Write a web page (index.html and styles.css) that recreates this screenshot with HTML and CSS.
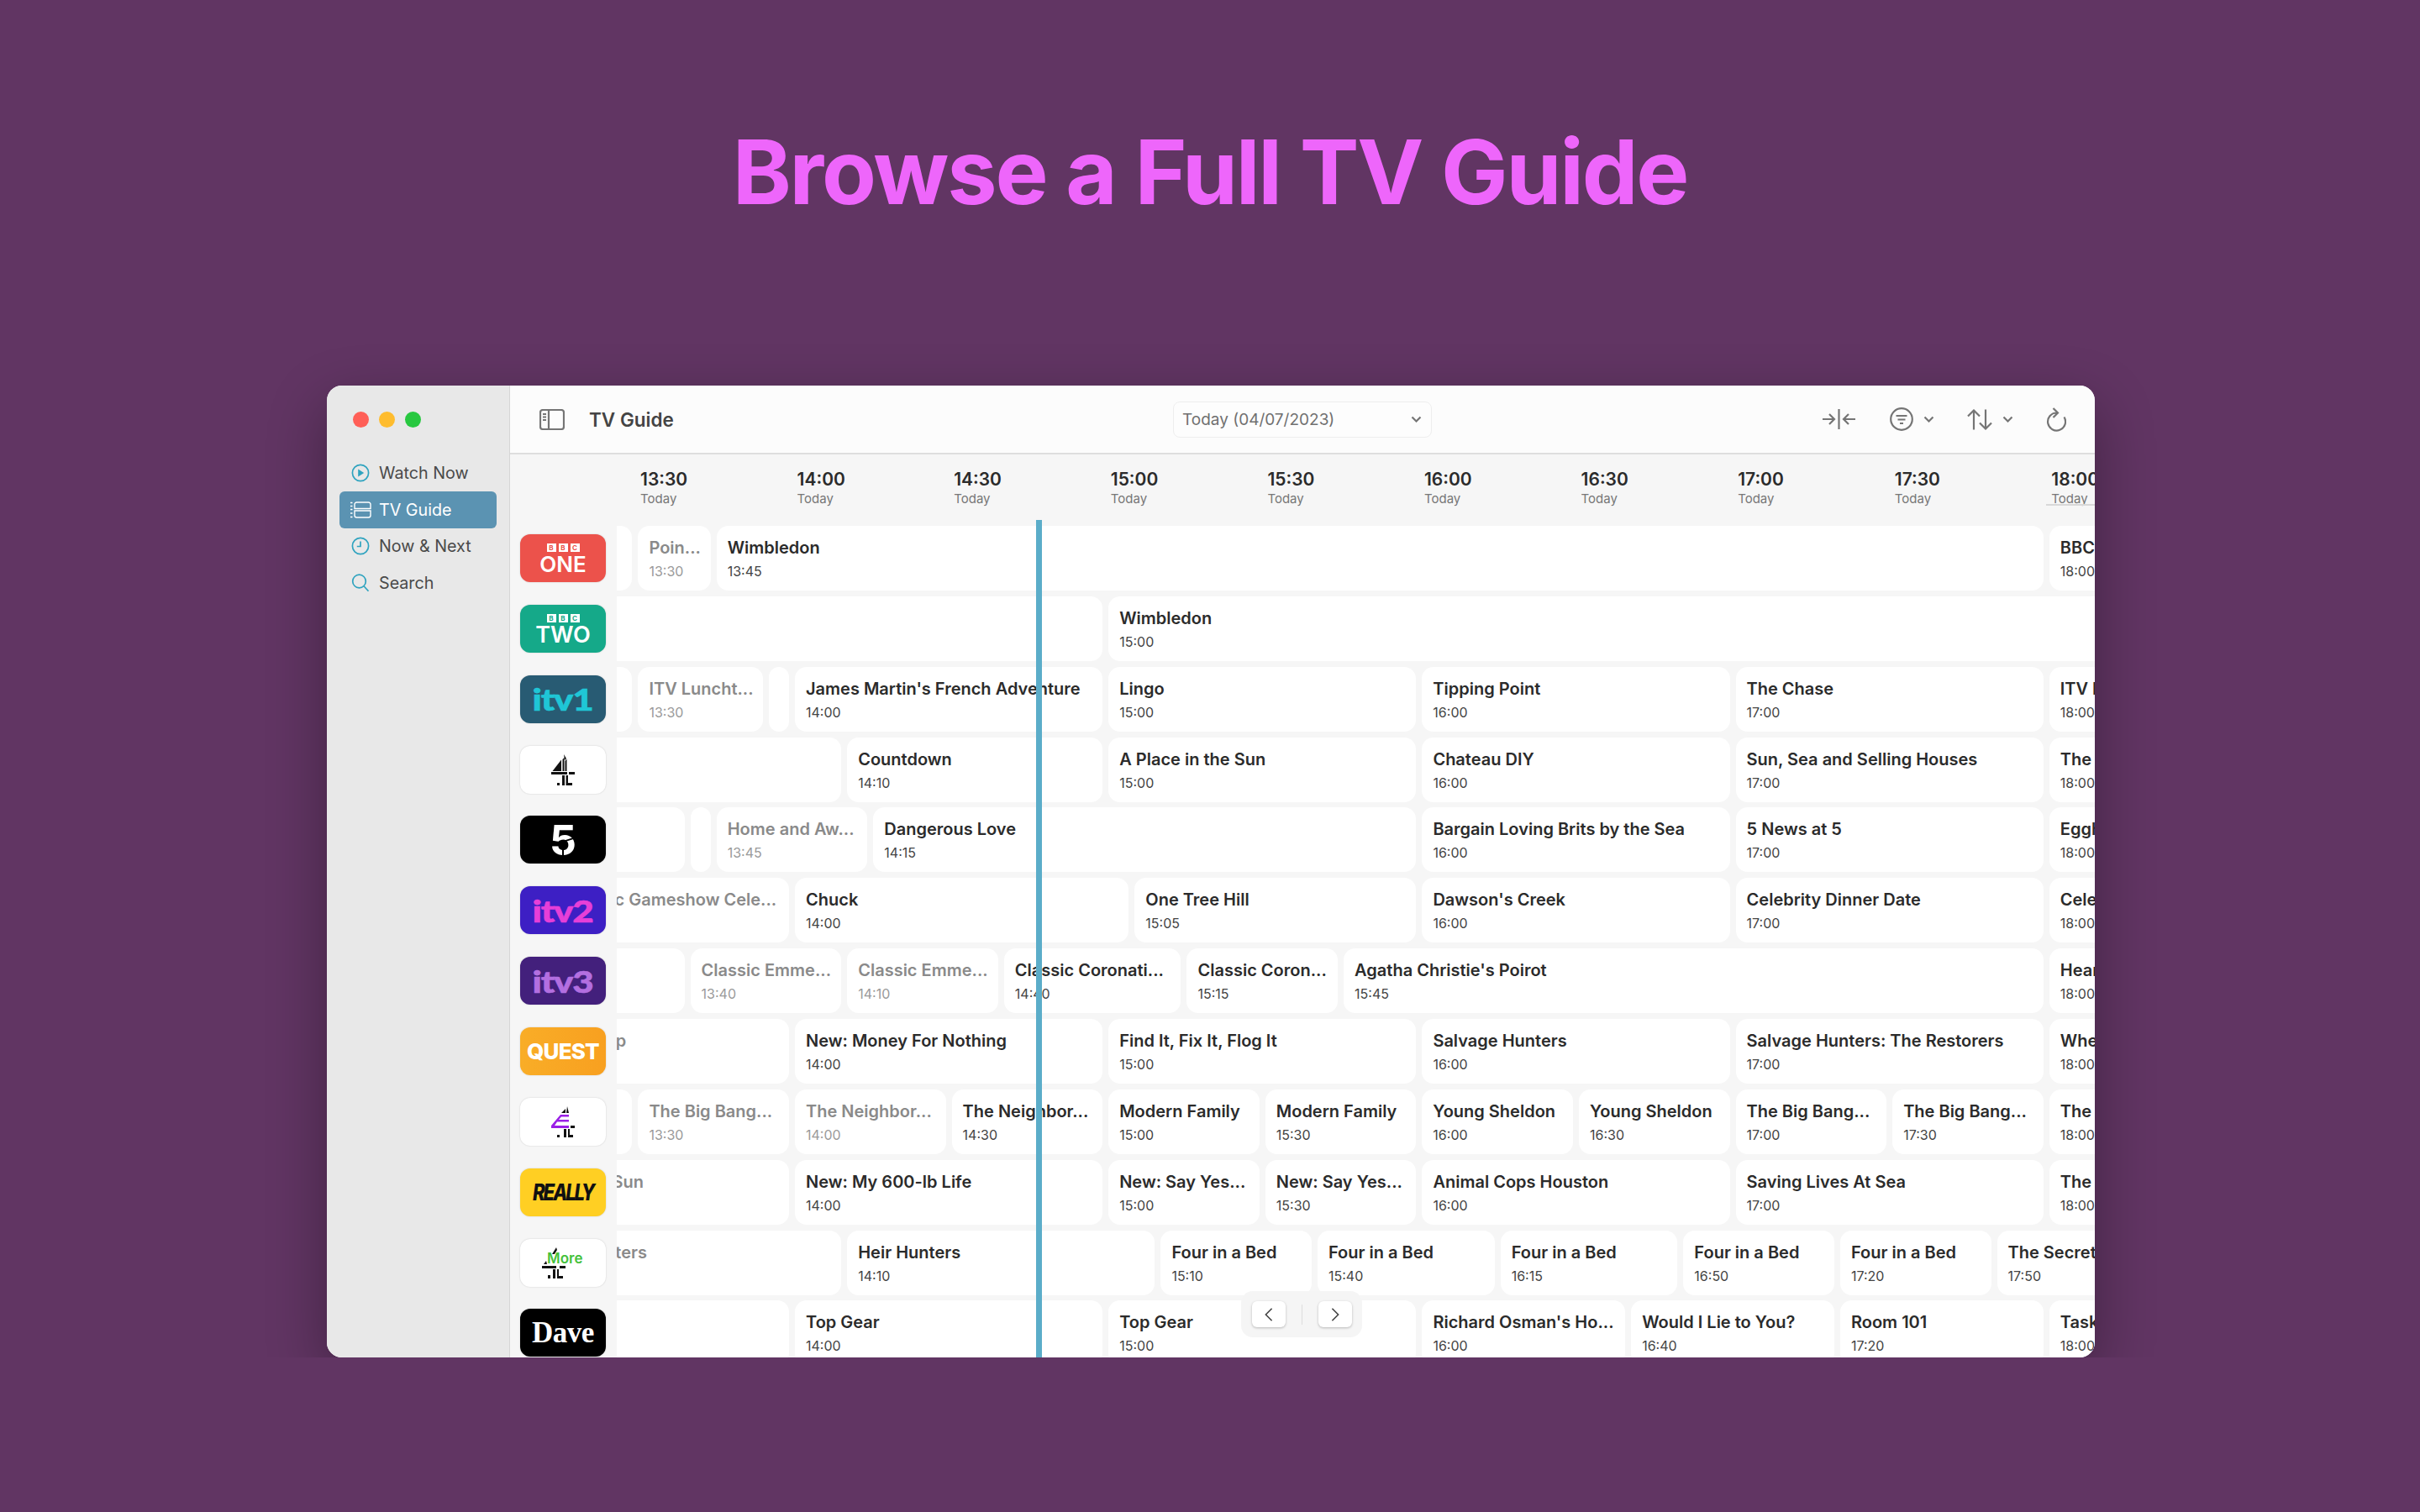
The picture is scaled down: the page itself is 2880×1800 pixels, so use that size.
FILE: index.html
```html
<!DOCTYPE html>
<html lang="en">
<head>
    <meta charset="UTF-8">
    <meta name="viewport" content="width=device-width, initial-scale=1.0">
    <title>Browse a Full TV Guide</title>
    <link rel="stylesheet" href="styles.css">
    <script>
        // pixels per minute on the guide, and where 14:00 sits inside a row
        const PX_PER_MIN = 6.22;
        const GAP = 7;
        const RIGHT_EDGE = 2600;

        // the lower half of the channel 4 family of marks is shared
        const FOUR_FOOT = "M7 34h3v3H7zM13 25h3v12h-3zM17.5 25H20v9h5v3h-7.5z";

        const hours = ["13:30", "14:00", "14:30", "15:00", "15:30", "16:00", "16:30", "17:00", "17:30", "18:00"];

        // each programme: [title, start, past?]
        const channels = [
            { logo: "logo-bbc-one", mark: bbcMark("ONE"), shows: [["", "13:10", 1], ["Poin...", "13:30", 1], ["Wimbledon", "13:45"], ["BBC News at Six", "18:00"]] },
            { logo: "logo-bbc-two", mark: bbcMark("TWO"), shows: [["", "13:10", 1], ["Wimbledon", "15:00"]] },
            { logo: "logo-itv1", mark: "<span>itv1</span>", shows: [["", "13:10", 1], ["ITV Luncht...", "13:30", 1], ["", "13:55", 1], ["James Martin's French Adventure", "14:00"], ["Lingo", "15:00"], ["Tipping Point", "16:00"], ["The Chase", "17:00"], ["ITV Evening News", "18:00"]] },
            { logo: "logo-white", mark: fourMark(""), shows: [["", "13:00", 1], ["Countdown", "14:10"], ["A Place in the Sun", "15:00"], ["Chateau DIY", "16:00"], ["Sun, Sea and Selling Houses", "17:00"], ["The Simpsons", "18:00"]] },
            { logo: "logo-five", mark: "<span>5</span><i></i><b></b>", shows: [["", "13:00", 1], ["", "13:40", 1], ["Home and Aw...", "13:45", 1], ["Dangerous Love", "14:15"], ["Bargain Loving Brits by the Sea", "16:00"], ["5 News at 5", "17:00"], ["Eggheads", "18:00"]] },
            { logo: "logo-itv2", mark: "<span>itv2</span>", shows: [["Classic Gameshow Cele...", "13:14", 1], ["Chuck", "14:00"], ["One Tree Hill", "15:05"], ["Dawson's Creek", "16:00"], ["Celebrity Dinner Date", "17:00"], ["Celebrity Juice", "18:00"]] },
            { logo: "logo-itv3", mark: "<span>itv3</span>", shows: [["", "13:00", 1], ["Classic Emme...", "13:40", 1], ["Classic Emme...", "14:10", 1], ["Classic Coronati...", "14:40"], ["Classic Coron...", "15:15"], ["Agatha Christie's Poirot", "15:45"], ["Heartbeat", "18:00"]] },
            { logo: "logo-quest", mark: "<span>QUEST</span>", shows: [["Wheeler Dealers: Trading Up", "12:41", 1], ["New: Money For Nothing", "14:00"], ["Find It, Fix It, Flog It", "15:00"], ["Salvage Hunters", "16:00"], ["Salvage Hunters: The Restorers", "17:00"], ["Wheeler Dealers", "18:00"]] },
            { logo: "logo-white", mark: fourMark("e4"), shows: [["", "13:10", 1], ["The Big Bang...", "13:30", 1], ["The Neighbor...", "14:00", 1], ["The Neighbor...", "14:30"], ["Modern Family", "15:00"], ["Modern Family", "15:30"], ["Young Sheldon", "16:00"], ["Young Sheldon", "16:30"], ["The Big Bang...", "17:00"], ["The Big Bang...", "17:30"], ["The Big Bang Theory", "18:00"]] },
            { logo: "logo-really", mark: "<span>REALLY</span>", shows: [["A Place in the Sun", "13:01", 1], ["New: My 600-lb Life", "14:00"], ["New: Say Yes...", "15:00"], ["New: Say Yes...", "15:30"], ["Animal Cops Houston", "16:00"], ["Saving Lives At Sea", "17:00"], ["The Yorkshire Vet", "18:00"]] },
            { logo: "logo-white", mark: fourMark("more"), shows: [["Heir Hunters", "13:10", 1], ["Heir Hunters", "14:10"], ["Four in a Bed", "15:10"], ["Four in a Bed", "15:40"], ["Four in a Bed", "16:15"], ["Four in a Bed", "16:50"], ["Four in a Bed", "17:20"], ["The Secret Life of the Zoo", "17:50"]] },
            { logo: "logo-dave", mark: "<span>Dave</span>", shows: [["", "13:00", 1], ["Top Gear", "14:00"], ["Top Gear", "15:00"], ["Richard Osman's Ho...", "16:00"], ["Would I Lie to You?", "16:40"], ["Room 101", "17:20"], ["Taskmaster", "18:00"]] }
        ];

        function bbcMark(word) {
            return `<div class="bbc-blocks"><u>B</u><u>B</u><u>C</u></div><span>${word}</span>`;
        }

        function fourMark(kind) {
            if (kind === "e4") {
                return `<svg class="four" viewBox="0 0 28 37"><path fill="#111" d="M12 8l5-5v5zM19 0l2 8h-3zM23 23h5v3h-5zM7 34h3v3H7zM15 27h3v10h-3zM20 27h2v7h4v3h-6z"/><path fill="#9a1fe6" d="M11 10h10v2.5h-9l-3 3.5h12v2.5H7l-3 4.5h17v3H0v-3z"/></svg>`;
            }
            if (kind === "more") {
                return `<div class="more-mark"><svg class="four" viewBox="0 0 28 37"><path fill="#111" d="M12 8l5-8 1 3-3 5zM2 20l3-4 1 4zM0 22h17v3H0zM21 22h7v3h-7zM7 33h3v4H7zM13 26h3v11h-3zM18 26h2v8h5v3h-7z"/></svg><em>More</em></div>`;
            }
            return `<svg class="four" viewBox="0 0 28 37"><path fill="#111" d="M15 0l3 5-2 2zM12 6.5V20H1.5zM13.5 6v14h2V4zM16.5 8l2-2.5V20h-2zM0 21h19v3H0zM21 21h7v3h-7z${FOUR_FOOT}"/></svg>`;
        }

        function toMinutes(time) {
            const [h, m] = time.split(":").map(Number);
            return h * 60 + m;
        }

        function xOf(time) {
            return (toMinutes(time) - 840) * PX_PER_MIN + 212;
        }

        function renderRow(channel) {
            const shows = channel.shows;
            const cards = shows.map((show, i) => {
                const left = xOf(show[1]);
                const right = i + 1 < shows.length ? xOf(shows[i + 1][1]) - GAP : RIGHT_EDGE;
                const past = show[2] ? " past" : "";
                const offset = i === 0 ? `margin-left:${left}px;` : "";
                const body = show[0] ? `<h3>${show[0]}</h3><p>${show[1]}</p>` : "";
                return `<div class="show${past}" style="${offset}width:${right - left}px">${body}</div>`;
            }).join("");
            return `<div class="row">
                <div class="logo ${channel.logo}">${channel.mark}</div>
                <div class="shows">${cards}</div>
            </div>`;
        }

        document.addEventListener("DOMContentLoaded", () => {
            document.getElementById("hours").innerHTML = hours.map(h => `
                <div class="hour"><strong>${h}</strong><span>Today</span></div>
            `).join("");
            document.getElementById("rows").innerHTML = channels.map(renderRow).join("");
        });
    </script>
</head>
<body>
    <h1 class="headline">Browse a Full TV Guide</h1>

    <div class="window">
        <aside class="sidebar">
            <div class="lights"><i class="red"></i><i class="amber"></i><i class="green"></i></div>
            <nav>
                <a class="nav-item">
                    <svg viewBox="0 0 22 22"><circle cx="11" cy="11" r="9.6"/><path class="solid" d="M8.2 6.4l7 4.6-7 4.6z"/></svg>
                    Watch Now
                </a>
                <a class="nav-item active">
                    <svg viewBox="0 0 25 20"><path d="M5 8.5v-5A2.5 2.5 0 0 1 7.5 1h14A2.5 2.5 0 0 1 24 3.5v5zM5 11h19v5.5a2.5 2.5 0 0 1-2.5 2.5h-14A2.5 2.5 0 0 1 5 16.5z"/><path class="dots" d="M0 1.5h2.5M0 5.5h2.5M0 9.5h2.5M0 14h2.5M0 18.5h2.5"/></svg>
                    TV Guide
                </a>
                <a class="nav-item">
                    <svg viewBox="0 0 22 22"><circle cx="11" cy="11" r="9.6"/><path d="M11 5.5v6H6.8"/></svg>
                    Now &amp; Next
                </a>
                <a class="nav-item">
                    <svg viewBox="0 0 22 22"><circle cx="9.5" cy="9" r="7.8"/><path d="M15 14.8l5.5 6"/></svg>
                    Search
                </a>
            </nav>
        </aside>

        <main class="content">
            <header class="toolbar">
                <svg class="tool side-toggle" viewBox="0 0 30 25"><rect x="1" y="1" width="28" height="23" rx="3"/><path d="M11 1v23M4 6h4M4 9.5h4M4 13h4"/></svg>
                <h2>TV Guide</h2>
                <div class="date-select">
                    <span>Today (04/07/2023)</span>
                    <svg class="chev" viewBox="0 0 13 8"><path d="M1.5 1.5l5 5 5-5"/></svg>
                </div>
                <div class="tools">
                    <svg class="tool compress" viewBox="0 0 39 24"><path d="M19.5 0v24M0 12h14M8 6l6 6-6 6M39 12H25M31 6l-6 6 6 6"/></svg>
                    <div class="tool-group">
                        <svg class="tool filter" viewBox="0 0 28 28"><circle cx="14" cy="14" r="12.8"/><path d="M7.5 10h13M9.5 14.5h9M12 19h4"/></svg>
                        <svg class="chev" viewBox="0 0 13 8"><path d="M1.5 1.5l5 5 5-5"/></svg>
                    </div>
                    <div class="tool-group sort-group">
                        <svg class="tool sort" viewBox="0 0 30 25"><path d="M8 24.5v-23M1 8.5l7-7 7 7M22 .5v23M15 16.5l7 7 7-7"/></svg>
                        <svg class="chev" viewBox="0 0 13 8"><path d="M1.5 1.5l5 5 5-5"/></svg>
                    </div>
                    <svg class="tool reload" viewBox="0 0 24 29"><path d="M12.5 6.5A10.5 10.5 0 1 0 21.5 11.5M8.5 1l5.5 5.5-5.5 5.5"/></svg>
                </div>
            </header>

            <div class="hours" id="hours"></div>
            <div class="rows" id="rows"></div>

            <div class="now-line"></div>
            <div class="hour-tick"></div>
            <div class="pager">
                <button><svg viewBox="0 0 12 20"><path d="M10 2L2 10l8 8"/></svg></button>
                <i></i>
                <button><svg viewBox="0 0 12 20"><path d="M2 2l8 8-8 8"/></svg></button>
            </div>
        </main>
    </div>
</body>
</html>
```

FILE: styles.css
```css
body {
    margin: 0;
    background-color: #613563;
    font-family: Inter, "Noto Sans", sans-serif;
    color: #2b2b2b;
}

.headline {
    margin: 0;
    padding-top: 142px;
    height: 459px;
    line-height: 126px;
    box-sizing: border-box;
    text-align: center;
    font-size: 106px;
    font-weight: 700;
    letter-spacing: -2.2px;
    color: #ee66fb;
}

.window {
    display: flex;
    width: 2104px;
    height: 1157px;
    margin-left: 389px;
    border-radius: 18px;
    overflow: hidden;
    background: #f6f6f6;
    box-shadow: 0 24px 70px rgba(0, 0, 0, 0.33);
}

/* sidebar */
.sidebar {
    flex: 0 0 218px;
    box-sizing: border-box;
    padding: 0 15px;
    background: #e8e8e8;
    border-right: 1px solid #d6d6d6;
}

.lights {
    display: flex;
    gap: 12px;
    box-sizing: border-box;
    height: 82px;
    padding: 31px 0 0 16px;
}

.lights i {
    width: 19px;
    height: 19px;
    border-radius: 50%;
}

.red { background: #ff5f57; }
.amber { background: #febc2e; }
.green { background: #28c840; }

.nav-item {
    display: flex;
    align-items: center;
    gap: 11px;
    height: 44px;
    margin-bottom: -0.3px;
    padding-left: 14px;
    border-radius: 6px;
    font-size: 19.7px;
    color: #4a4a4a;
}

.nav-item svg {
    width: 22px;
    height: 22px;
    fill: none;
    stroke: #2fa3bf;
    stroke-width: 1.7;
}

.nav-item svg .solid {
    fill: #2fa3bf;
    stroke: none;
}

.nav-item.active {
    background: #5b93b2;
    color: #fff;
}

.nav-item.active svg {
    stroke: #fff;
    stroke-width: 1.4;
    width: 25px;
    height: 20px;
    margin-left: -1px;
    margin-right: -2px;
}

/* toolbar */
.content {
    flex: 1;
    position: relative;
    min-width: 0;
}

.toolbar {
    display: flex;
    align-items: center;
    height: 80px;
    padding: 0 34px 0 35px;
    background: #fcfcfc;
    border-bottom: 2px solid #dedede;
}

.toolbar h2 {
    width: 695px;
    margin: 0 0 0 29px;
    font-size: 22.5px;
    font-weight: 600;
    color: #444;
}

.tool {
    fill: none;
    stroke: #757575;
    stroke-width: 2.2;
}

.side-toggle {
    width: 30px;
    height: 25px;
}

.date-select {
    display: flex;
    align-items: center;
    justify-content: space-between;
    box-sizing: border-box;
    width: 308px;
    height: 43px;
    padding: 0 11px 0 10px;
    background: #fdfdfd;
    border: 1.5px solid #eee;
    border-radius: 8px;
    font-size: 19px;
    color: #707070;
}

.chev {
    width: 13px;
    height: 8px;
    fill: none;
    stroke: #757575;
    stroke-width: 2.2;
}

.tools {
    display: flex;
    align-items: center;
    margin-left: auto;
    gap: 41px;
}

.tool-group {
    display: flex;
    align-items: center;
    gap: 12px;
}

.sort-group {
    margin-left: -2px;
}

.compress { width: 39px; height: 24px; }
.filter { width: 28px; height: 28px; }
.sort { width: 30px; height: 25px; }
.reload { width: 24px; height: 29px; margin-left: -2px; }

/* time header */
.hours {
    display: flex;
    height: 85px;
    padding-left: 155px;
}

.hour {
    flex: 0 0 186.6px;
    padding-top: 17px;
}

.hour strong {
    display: block;
    font-size: 21px;
    font-weight: 600;
    line-height: 26px;
    color: #2b2b2b;
}

.hour span {
    display: block;
    font-size: 15px;
    line-height: 20px;
    color: #777;
}

/* guide rows */
.rows {
    display: flex;
    flex-direction: column;
    gap: 6.86px;
}

.row {
    display: flex;
    align-items: center;
    flex: 0 0 77px;
    padding-left: 12px;
}

.logo {
    flex: 0 0 102px;
    height: 57px;
    margin-right: 13px;
    display: flex;
    align-items: center;
    justify-content: center;
    flex-direction: column;
    position: relative;
    border-radius: 12px;
    overflow: hidden;
    box-shadow: 0 0 2px rgba(0, 0, 0, 0.18);
    color: #fff;
}

.shows {
    display: flex;
    gap: 7px;
    flex: 1;
    min-width: 0;
    height: 77px;
    overflow: hidden;
}

.show {
    flex: none;
    box-sizing: border-box;
    height: 77px;
    padding: 14px 0 0 13px;
    background: #fff;
    border-radius: 14px;
}

.show:empty {
    padding: 0;
}

.show h3 {
    margin: 0;
    font-size: 20px;
    font-weight: 600;
    line-height: 24px;
    white-space: nowrap;
    color: #2b2b2b;
}

.show p {
    margin: 6px 0 0;
    font-size: 16px;
    line-height: 20px;
    color: #444;
}

.show.past h3 { color: #8a8a8a; }
.show.past p { color: #9a9a9a; }

/* channel logos */
.logo-bbc-one { background: #ec524b; }
.logo-bbc-two { background: #15a989; }

.bbc-blocks {
    display: flex;
    gap: 3px;
    margin: 2px 0 2px;
}

.bbc-blocks u {
    width: 11px;
    height: 10px;
    background: #fff;
    font-size: 8px;
    font-weight: 700;
    line-height: 10px;
    text-align: center;
    text-decoration: none;
}

.logo-bbc-one u { color: #ec524b; }
.logo-bbc-two u { color: #15a989; }

.logo-bbc-one span,
.logo-bbc-two span {
    font-size: 26px;
    font-weight: 600;
    line-height: 25px;
}

.logo-bbc-two span {
    font-size: 27px;
}

.logo-itv1 { background: #285b73; color: #1fc6d6; }
.logo-itv2 { background: #3d1fc4; color: #e63fd8; }
.logo-itv3 { background: #43207c; color: #b36fe0; }

.logo-itv1 span,
.logo-itv2 span,
.logo-itv3 span {
    font-family: Lato, sans-serif;
    font-size: 36px;
    font-weight: 900;
    letter-spacing: -1px;
    -webkit-text-stroke: 0.6px currentColor;
    transform: scaleX(1.22);
}

.logo-white { background: #fff; }

.four {
    width: 28px;
    height: 37px;
}

.more-mark {
    position: relative;
    width: 50px;
    height: 37px;
}

.more-mark em {
    position: absolute;
    left: 6px;
    top: 3px;
    font-size: 17px;
    font-weight: 600;
    font-style: normal;
    color: #45c13c;
}

.logo-five { background: #000; }

.logo-five span {
    font-size: 50px;
    font-weight: 700;
    line-height: 50px;
}

.logo-five i {
    position: absolute;
    left: 36px;
    top: 30px;
    width: 30px;
    height: 2px;
    background: #000;
    transform: rotate(-18deg);
}

.logo-five b {
    position: absolute;
    left: 50px;
    top: 34px;
    width: 2px;
    height: 16px;
    background: #000;
}

.logo-quest { background: linear-gradient(90deg, #f9ad27, #f8a020); }

.logo-quest span {
    font-size: 26px;
    font-weight: 800;
    letter-spacing: -0.8px;
}

.logo-really { background: #ffcf23; color: #111; }

.logo-really span {
    font-size: 27px;
    font-weight: 800;
    font-style: italic;
    letter-spacing: -2.5px;
    transform: scaleX(0.82);
}

.logo-dave { background: #000; }

.logo-dave span {
    font-family: "Liberation Serif", serif;
    font-size: 35px;
    font-weight: 700;
    letter-spacing: -0.5px;
}

/* overlays */
.now-line {
    position: absolute;
    left: 626px;
    top: 160px;
    bottom: 0;
    width: 7px;
    background: #5badc9;
}

.hour-tick {
    position: absolute;
    left: 1828px;
    top: 141px;
    right: 0;
    height: 2px;
    background: #d8d8d8;
}

.pager {
    position: absolute;
    left: 870px;
    top: 1078px;
    display: flex;
    align-items: center;
    gap: 19px;
    box-sizing: border-box;
    width: 144px;
    height: 55px;
    padding: 0 12px 0 13px;
    border-radius: 14px;
    background: #f5f5f5;
}

.pager button {
    display: flex;
    align-items: center;
    justify-content: center;
    width: 40px;
    height: 31px;
    padding: 0;
    border: none;
    border-radius: 6px;
    background: #fff;
    box-shadow: 0 1px 3px rgba(0, 0, 0, 0.25);
}

.pager svg {
    width: 12px;
    height: 18px;
    fill: none;
    stroke: #444;
    stroke-width: 1.8;
}

.pager i {
    width: 1px;
    height: 24px;
    background: #ddd;
}
```
